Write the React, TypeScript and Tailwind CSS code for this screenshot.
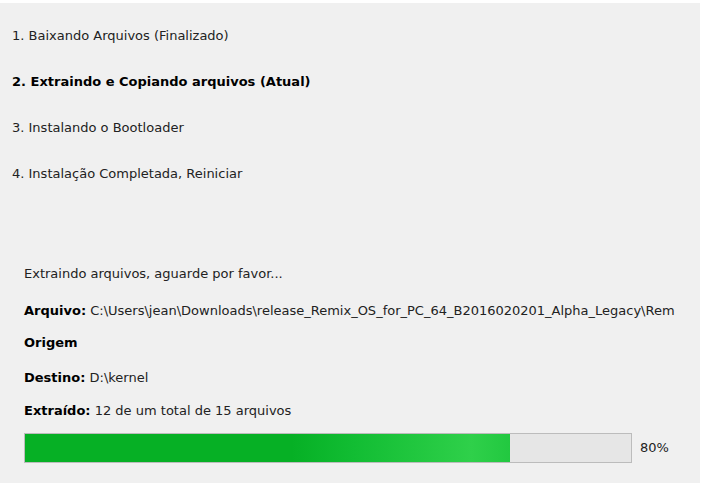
import React from "react";

const STEPS = [
  { label: "1. Baixando Arquivos (Finalizado)", current: false },
  { label: "2. Extraindo e Copiando arquivos (Atual)", current: true },
  { label: "3. Instalando o Bootloader", current: false },
  { label: "4. Instalação Completada, Reiniciar", current: false },
];

const PROGRESS = 80;

export default function App() {
  return (
    <div className="h-[483px] w-[704px] overflow-hidden bg-white pt-[3px] pr-[4px] font-['DejaVu_Sans',sans-serif] text-[13px] text-[#222]">
      <div className="flex h-full flex-col bg-[#f0f0f0]">
        {/* Steps */}
        <div className="flex flex-col gap-[24px] pl-[12px] pt-[22px]">
          {STEPS.map((step) => (
            <div
              key={step.label}
              className={`h-[22px] leading-[22px] ${step.current ? "font-bold text-black" : ""}`}
            >
              {step.label}
            </div>
          ))}
        </div>

        {/* Details */}
        <div className="flex flex-col pl-[24px] pt-[78px]">
          <div className="h-[22px] leading-[22px]">Extraindo arquivos, aguarde por favor...</div>
          <div className="mt-[15px] h-[22px] whitespace-nowrap leading-[22px]">
            <span className="font-bold text-black">Arquivo:</span>{" "}
            C:\Users\jean\Downloads\release_Remix_OS_for_PC_64_B2016020201_Alpha_Legacy\Rem
          </div>
          <div className="mt-[10px] h-[22px] font-bold leading-[22px] text-black">Origem</div>
          <div className="mt-[13px] h-[22px] leading-[22px]">
            <span className="font-bold text-black">Destino:</span> D:\kernel
          </div>
          <div className="mt-[11px] h-[22px] leading-[22px]">
            <span className="font-bold text-black">Extraído:</span> 12 de um total de 15 arquivos
          </div>
          <div className="mt-[11px] flex items-center gap-[8px]">
            <div className="h-[30px] w-[608px] border border-[#bcbcbc] bg-[#e6e6e6]">
              <div
                className="h-full bg-[linear-gradient(90deg,#06b025_0%,#06b025_55%,#12bd33_68%,#2fd04a_92%,#22c840_100%)]"
                style={{ width: `${PROGRESS}%` }}
              />
            </div>
            <span>{PROGRESS}%</span>
          </div>
        </div>
      </div>
    </div>
  );
}
